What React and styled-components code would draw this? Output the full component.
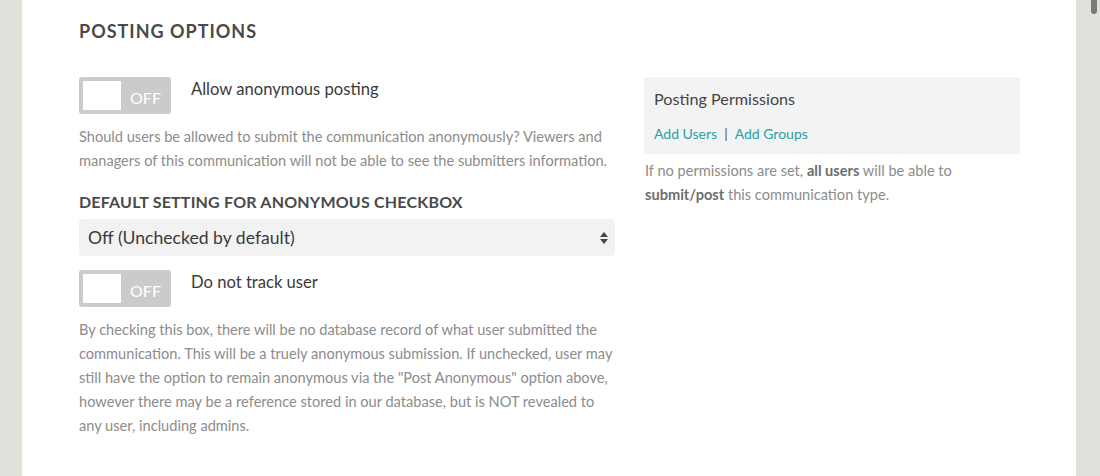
import React from 'react';
import styled, { createGlobalStyle } from 'styled-components';

const Global = createGlobalStyle`
  html, body {
    margin: 0;
    padding: 0;
    background: #e1e1dc;
    font-family: 'Lato', 'Open Sans', sans-serif;
  }
`;

const Page = styled.div`
  display: flex;
  width: 1100px;
  height: 476px;
  overflow: hidden;
`;

const Gutter = styled.div`
  width: ${(p) => p.w}px;
  flex-shrink: 0;
  background: #e1e1dc;
  position: relative;
`;

const ScrollThumb = styled.div`
  position: absolute;
  top: -4px;
  right: 3px;
  width: 6px;
  height: 18px;
  border-radius: 3px;
  background: #7a7a7a;
`;

const Panel = styled.div`
  flex: 1;
  background: #fff;
  padding: 20px 56px 0 57px;
`;

const Heading = styled.h2`
  margin: 0 0 35px;
  font-size: 18px;
  font-weight: 700;
  letter-spacing: 1px;
  color: #4a4a4a;
  line-height: 22px;
`;

const Columns = styled.div`
  display: flex;
  gap: 29px;
`;

const LeftCol = styled.div`
  width: 536px;
  flex-shrink: 0;
`;

const RightCol = styled.div`
  width: 376px;
  flex-shrink: 0;
`;

const ToggleRow = styled.div`
  display: flex;
  align-items: flex-start;
  gap: 20px;
`;

const Toggle = styled.div`
  width: 92px;
  height: 37px;
  box-sizing: border-box;
  border-radius: 3px;
  background: #cbcbcb;
  padding: 4px;
  display: flex;
  align-items: center;
  flex-shrink: 0;
`;

const Knob = styled.div`
  width: 38px;
  height: 29px;
  background: #fff;
`;

const ToggleText = styled.span`
  flex: 1;
  text-align: center;
  color: #fff;
  font-size: 16px;
  padding: 3px 0 0 3px;
`;

const ToggleLabel = styled.span`
  font-size: 16.6px;
  color: #3a3a3a;
  line-height: 24px;
`;

const Help = styled.p`
  margin: ${(p) => p.m || '0'};
  font-size: 14.6px;
  line-height: 24px;
  color: #8c8c8c;
  b {
    color: #6e6e6e;
    font-weight: 700;
  }
`;

const SubHeading = styled.h3`
  margin: 0 0 6px;
  font-size: 16px;
  font-weight: 700;
  letter-spacing: 0.2px;
  color: #4a4a4a;
  line-height: 22px;
`;

const Select = styled.div`
  height: 37px;
  background: #f2f2f2;
  border-radius: 4px;
  display: flex;
  align-items: center;
  justify-content: space-between;
  padding: 0 6px 0 9px;
  margin-bottom: 14px;
  font-size: 17.6px;
  color: #3a3a3a;
`;

const Arrows = styled.svg`
  width: 10px;
  height: 16px;
`;

const PermBox = styled.div`
  background: #f3f3f3;
  height: 77px;
  box-sizing: border-box;
  padding: 11px 10px 0;
`;

const PermTitle = styled.div`
  font-size: 16.2px;
  color: #444;
  line-height: 22px;
  margin-bottom: 15px;
`;

const Links = styled.div`
  font-size: 14px;
  color: #2aa0a6;
  display: flex;
  gap: 7px;
  a {
    color: inherit;
    text-decoration: none;
  }
  span {
    color: #555;
  }
`;

export default function App() {
  return (
    <>
      <Global />
      <Page>
        <Gutter w={22} />
        <Panel>
          <Heading>POSTING OPTIONS</Heading>
          <Columns>
            <LeftCol>
              <ToggleRow>
                <Toggle>
                  <Knob />
                  <ToggleText>OFF</ToggleText>
                </Toggle>
                <ToggleLabel>Allow anonymous posting</ToggleLabel>
              </ToggleRow>
              <Help m="11px 0 18px">
                Should users be allowed to submit the communication anonymously? Viewers and managers of this
                communication will not be able to see the submitters information.
              </Help>
              <SubHeading>DEFAULT SETTING FOR ANONYMOUS CHECKBOX</SubHeading>
              <Select>
                Off (Unchecked by default)
                <Arrows viewBox="0 0 10 16">
                  <path d="M5 2 L9 7 H1 Z" fill="#444" />
                  <path d="M5 14 L9 9 H1 Z" fill="#444" />
                </Arrows>
              </Select>
              <ToggleRow>
                <Toggle>
                  <Knob />
                  <ToggleText>OFF</ToggleText>
                </Toggle>
                <ToggleLabel>Do not track user</ToggleLabel>
              </ToggleRow>
              <Help m="11px 0 0">
                By checking this box, there will be no database record of what user submitted the communication. This
                will be a truely anonymous submission. If unchecked, user may still have the option to remain anonymous
                via the "Post Anonymous" option above, however there may be a reference stored in our database, but is
                NOT revealed to any user, including admins.
              </Help>
            </LeftCol>
            <RightCol>
              <PermBox>
                <PermTitle>Posting Permissions</PermTitle>
                <Links>
                  <a href="#">Add Users</a>
                  <span>|</span>
                  <a href="#">Add Groups</a>
                </Links>
              </PermBox>
              <Help m="5px 0 0 1px">
                If no permissions are set, <b>all users</b> will be able to <br />
                <b>submit/post</b> this communication type.
              </Help>
            </RightCol>
          </Columns>
        </Panel>
        <Gutter w={24}>
          <ScrollThumb />
        </Gutter>
      </Page>
    </>
  );
}
